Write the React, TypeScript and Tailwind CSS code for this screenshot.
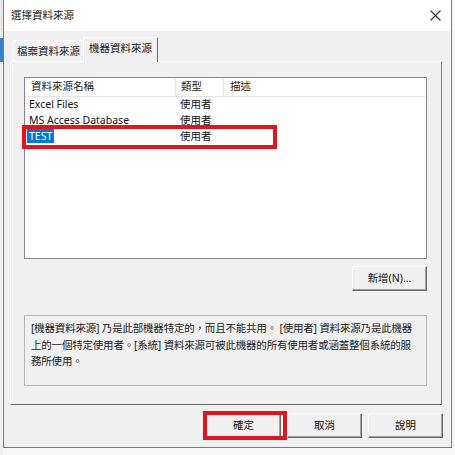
import React from 'react';

const font = { fontFamily: '"Noto Sans", "Noto Sans CJK TC", sans-serif' };

function ClassicButton({ label, children }: { label: string; children?: React.ReactNode }) {
  return (
    <div className="relative w-[75px] h-[25px]">
      <button className="w-full h-full bg-[#f0f0f0] border border-t-white border-l-white border-r-[#696969] border-b-[#696969] shadow-[inset_-1px_-1px_0_#a0a0a0] text-[10.5px] text-[#111] flex items-center justify-center">
        {label}
      </button>
      {children}
    </div>
  );
}

export default function App() {
  const rows = [
    { name: 'Excel Files', type: '使用者' },
    { name: 'MS Access Database', type: '使用者' },
    { name: 'TEST', type: '使用者', selected: true },
  ];

  return (
    <div className="w-[455px] h-[455px] bg-[#f6f6f6] flex overflow-hidden text-[#111]" style={font}>
      {/* window behind */}
      <div className="w-[3px] flex flex-col">
        <div className="h-[38px] bg-[#e8e8e8]" />
        <div className="h-[24px] bg-[#3c7fc9]" />
        <div className="flex-1 bg-[#f0f0f0]" />
      </div>

      {/* dialog */}
      <div className="w-[449px] h-[448px] border-l border-r border-b border-[#7a7a7a] flex flex-col bg-[#f0f0f0]">
        {/* title bar */}
        <div className="h-[31px] bg-white flex items-center justify-between pl-[7px] pr-[10px] shrink-0">
          <span className="text-[10.5px] text-[#222]">選擇資料來源</span>
          <svg width="11" height="11" viewBox="0 0 11 11">
            <path d="M0.5 0.5 L10.5 10.5 M10.5 0.5 L0.5 10.5" stroke="#333" strokeWidth="1.1" />
          </svg>
        </div>

        {/* body */}
        <div className="flex flex-col pl-[6px] pr-[9px] pt-[6px]">
          {/* tabs */}
          <div className="h-[24px] flex items-end pl-[3px]">
            <div className="h-[21px] w-[70px] border-t border-l border-t-white border-l-white flex items-center justify-center pt-[2px] whitespace-nowrap text-[10.5px] text-[#222] bg-[#f0f0f0]">
              檔案資料來源
            </div>
            <div className="h-[25px] w-[75px] -mb-[1px] border-t border-l border-r border-t-white border-l-white border-r-[#696969] flex items-center justify-center pb-[2px] whitespace-nowrap text-[10.5px] text-[#222] bg-[#f0f0f0] relative z-10">
              機器資料來源
            </div>
          </div>

          {/* tab panel */}
          <div className="h-[344px] border border-t-white border-l-white border-r-[#7f7f7f] border-b-[#6a6a6a] pl-[13px] pr-[14px] pt-[15px] flex flex-col">
            {/* listview */}
            <div className="h-[182px] bg-white border border-[#828790] flex flex-col">
              <div className="h-[19px] flex border-b border-[#e5e5e5] text-[10.5px] text-[#222]">
                <div className="w-[151px] pl-[6px] flex items-center border-r border-[#e5e5e5]">資料來源名稱</div>
                <div className="w-[48px] pl-[5px] flex items-center border-r border-[#e5e5e5]">類型</div>
                <div className="flex-1 pl-[6px] flex items-center">描述</div>
              </div>
              {rows.map((r) => (
                <div key={r.name} className="h-[16px] flex items-center text-[10.5px] relative">
                  <div className="w-[151px] pl-[2px]">
                    <span className={r.selected ? 'bg-[#0078d7] text-white px-[2px]' : 'px-[2px]'}>{r.name}</span>
                  </div>
                  <div className="w-[48px] pl-[4px]">{r.type}</div>
                  {r.selected && (
                    <div className="absolute left-[-3px] top-[-4px] w-[255px] h-[24px] border-[4px] border-[#e3141d]" />
                  )}
                </div>
              ))}
            </div>

            <div className="flex justify-end mt-[7px]">
              <ClassicButton label="新增(N)..." />
            </div>

            {/* info box */}
            <div className="mt-[24px] h-[71px] border border-[#b5b5b5] px-[6px] pt-[4px] text-[10.5px] tracking-[-0.2px] leading-[16.5px] text-[#222] whitespace-nowrap">
              [機器資料來源] 乃是此部機器特定的，而且不能共用。 [使用者] 資料來源乃是此機器
              <br />
              上的一個特定使用者。[系統] 資料來源可被此機器的所有使用者或涵蓋整個系統的服
              <br />
              務所使用。
            </div>
          </div>

          {/* dialog buttons */}
          <div className="flex justify-end gap-[6px] mt-[8px] mr-[-1px]">
            <ClassicButton label="確定">
              <div className="absolute left-[-3px] top-[-2px] w-[84px] h-[29px] border-[4px] border-[#e3141d] pointer-events-none" />
            </ClassicButton>
            <ClassicButton label="取消" />
            <ClassicButton label="說明" />
          </div>
        </div>
      </div>
    </div>
  );
}
